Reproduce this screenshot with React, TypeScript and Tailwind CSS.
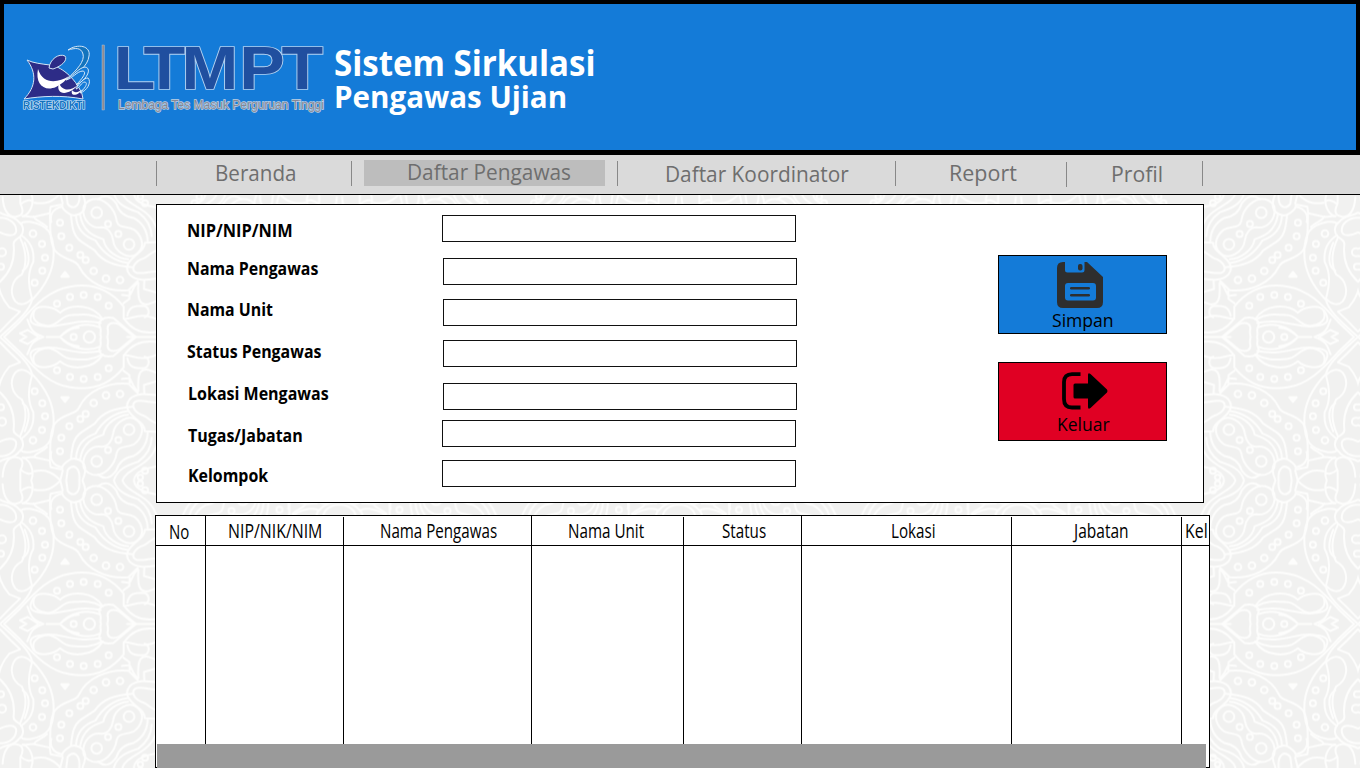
import { useLayoutEffect, useRef } from "react";

type FitProps = { w: number; className?: string; children: string };

/* One line of text condensed or widened to an exact width, with a small side bearing. */
function Fit({ w, className = "", children }: FitProps) {
  const ref = useRef<HTMLSpanElement>(null);
  useLayoutEffect(() => {
    const el = ref.current;
    if (el) el.style.transform = `translateX(1px) scaleX(${(w - 1.5) / el.offsetWidth})`;
  }, [w, children]);
  return (
    <span className={`block shrink-0 ${className}`} style={{ width: w }}>
      <span ref={ref} className="inline-block origin-left whitespace-nowrap align-top">
        {children}
      </span>
    </span>
  );
}

const dots: [number, number, number][] = [
  [290, 68, 16], [387, 163, 16], [268, 441, 17], [324, 102, 9], [355, 132, 9],
  [180, 98, 9], [184, 139, 9], [208, 173, 9], [241, 195, 9], [257, 210, 9],
  [281, 243, 10], [318, 266, 10], [360, 270, 10], [99, 131, 10], [126, 162, 9],
  [135, 203, 9], [127, 242, 9], [104, 278, 9], [171, 341, 9], [210, 321, 9],
  [251, 315, 9], [293, 321, 9], [326, 347, 9], [221, 441, 9], [6, 187, 12],
  [3, 230, 9], [435, 40, 9], [421, 20, 8],
];

const strands = [
  "M0 441 C45 400 88 365 96 330 C135 290 161 245 161 190 C161 130 145 105 90 95 C75 96 66 95 62 102",
  "M12 441 L60 395 C110 340 150 300 210 290 C285 277 335 305 371 350 L371 383",
  "M0 425 L32 392 L60 365 L28 352 C5 325 -6 295 -5 268",
  "M0 275 C32 245 45 205 41 165 C39 152 50 148 61 140 C78 120 64 99 57 97 C45 76 18 80 0 68",
  "M0 83 C28 82 52 102 48 126 C42 142 18 135 0 127",
  "M60 143 C78 181 82 222 65 254 C34 270 27 309 46 334 C61 350 83 341 96 326 C83 279 83 247 100 215 C103 177 91 155 63 135",
  "M68 242 C89 230 91 200 74 158",
  "M8 22 C10 60 25 83 48 80 C79 76 65 49 61 40 L61 12 M94 12 C105 41 90 72 69 79 M62 43 C75 30 92 28 98 35",
  "M67 78 L100 81 L149 70 L152 50 L182 44 M100 80 C112 97 127 96 141 111 M150 72 C151 122 149 156 165 182 C191 213 230 207 238 231 C260 276 320 307 385 301 L413 273",
  "M181 12 L188 40 C179 57 213 78 225 76 C263 70 259 37 248 12 M199 12 L203 42 C221 63 241 48 238 12",
  "M103 38 C137 45 158 34 180 12 M185 50 C158 56 148 76 154 96",
  "M213 79 C217 116 221 139 244 155 L284 181 C308 216 345 228 397 232",
  "M228 78 C230 111 248 138 286 151 C309 190 340 213 384 219",
  "M240 73 C248 124 280 138 310 148 C316 184 356 206 384 208",
  "M250 55 C247 90 274 117 304 112 C323 112 336 128 339 150 C343 186 389 215 415 187 C438 165 421 133 402 119 C377 108 355 115 350 93 C345 54 309 20 278 28 C257 34 250 47 250 55",
  "M294 28 C316 10 334 20 349 41 C357 68 377 80 401 84 C432 101 442 128 443 154",
  "M342 12 C353 47 386 57 415 67 C438 84 454 107 455 139 M368 12 C375 31 394 39 426 60 C457 80 468 105 476 133",
  "M402 12 C406 41 445 48 472 53 M480 156 L435 158 C433 180 415 188 401 202 C378 222 377 240 389 254 C412 278 455 267 480 265",
  "M480 181 C453 180 443 205 423 208 C395 222 394 244 411 249 C437 252 460 240 480 246",
  "M413 276 C379 318 405 321 366 315 M389 302 L388 327 L370 340 M433 272 L432 297 L480 311 M415 279 C413 320 415 346 443 343 L480 330",
  "M382 377 C387 349 405 347 428 347 C448 348 453 374 434 382 M371 386 C390 390 414 370 447 380 C466 383 474 390 480 397",
  "M375 390 C398 422 435 434 480 424 M382 441 L408 441 L340 384 C308 378 292 394 300 411 C306 422 298 432 303 441",
  "M403 441 L357 403 C332 393 321 404 323 418 C326 431 322 436 322 441",
  "M100 364 C82 394 93 404 125 407 C180 420 215 382 302 399 M102 362 C118 342 163 351 180 368 C214 340 280 343 308 388",
  "M103 362 C91 391 116 405 143 408 C179 405 182 376 215 375 C254 372 277 371 305 388",
  "M82 389 C92 409 88 426 130 441 M180 441 C205 409 260 394 300 412 M140 441 L180 441 C205 419 218 414 236 413",
  "M60 430 L83 420 L116 441 M60 430 L79 441 M410 441 L510 441 M480 360 C498 370 502 390 510 401",
];

function Motif() {
  return (
    <g fill="none" stroke="#fdfdfc" strokeWidth="6" strokeLinejoin="round" strokeLinecap="round">
      {strands.map((d) => <path key={d} d={d} />)}
      {dots.map(([x, y, r]) => <circle key={`${x}-${y}`} cx={x} cy={y} r={r} />)}
      <path d="M184 260 L195 246 L206 260 Z" fill="#fdfdfc" />
    </g>
  );
}

function Backdrop() {
  return (
    <svg className="absolute inset-0 -z-10" width="1360" height="768" aria-hidden="true">
      <defs>
        <clipPath id="quarter"><rect x="0" y="10.5" width="510" height="431" /></clipPath>
        <g id="cell"><g clipPath="url(#quarter)"><Motif /></g></g>
        <g id="half">
          <use href="#cell" />
          <use href="#cell" transform="matrix(1 0 0 -1 0 882)" />
        </g>
        <pattern id="lace" x="0" y="193.5" width="339.5" height="287" patternUnits="userSpaceOnUse">
          <g transform="translate(0 -3.5) scale(.3333)">
            <use href="#half" />
            <use href="#half" transform="matrix(-1 0 0 1 1018.5 0)" />
          </g>
        </pattern>
      </defs>
      <rect width="1360" height="768" fill="#f1f1f0" />
      <rect y="195" width="1360" height="573" fill="url(#lace)" />
    </svg>
  );
}

function Logo() {
  return (
    <svg width="310" height="96" viewBox="18 28 310 96" aria-label="LTMPT">
      <g stroke="#d3e6f7" strokeWidth="1" strokeLinejoin="round">
        <path fill="#2d2c87" d="M27 60 C33 63 42 64 50 65 C60 66 75 77 82 94 L83 99 C62 95 42 96 24 99 C36 87 37 73 27 60Z" />
        <path fill="#2d2c87" d="M49 68 C50 59 59 53 65 56 C68 60 62 66 53 69Z" />
        <path fill="#1474bd" d="M68 50 C78 43 91 46 89 56 C88 66 77 74 67 79 C77 70 85 61 83 54 C81 47 75 48 68 50Z" />
        <path fill="#147bd8" d="M66 80 C76 73 79 68 85 67 C92 68 88 79 76 85 C83 78 87 72 83 71 C77 71 72 79 66 80Z M76 89 C80 82 84 78 88 78 C92 82 87 91 80 93 C86 87 88 83 85 82 C81 82 80 88 76 89Z" />
      </g>
      <g fill="white">
        <path d="M38 69 C35 84 44 92 56 87 C62 84 66 80 69 76 C58 83 43 85 38 69Z" />
        <path d="M59 83 C55 95 68 97 79 84 C70 92 62 91 59 83Z M72 90 C70 98 79 95 83 89 C78 93 74 93 72 90Z" />
      </g>
      <text x="23" y="108.500" fontFamily="Liberation Sans" fontSize="10" fontWeight="bold" fill="#1272bd" stroke="#e1effa" strokeWidth="1.200" paintOrder="stroke" textLength="62" lengthAdjust="spacingAndGlyphs">RISTEKDIKTI</text>
      <rect x="102" y="45" width="2.4" height="65" fill="#8e8b93" stroke="#bfd0df" strokeWidth=".4" />
      <g transform="translate(0 88.500) scale(1.1 1)">
        <text x="103.500 130.500 165 217.500 256" y="0" fontFamily="Liberation Sans" fontWeight="bold" fontSize="62" fill="#204f9f" stroke="#b5d3f1" strokeWidth="1.700" paintOrder="stroke">LTMPT</text>
      </g>
      <text x="118" y="108.500" fontFamily="Liberation Sans" fontSize="12" fill="#858794" stroke="#c0d1e3" strokeWidth="1.300" paintOrder="stroke" textLength="206" lengthAdjust="spacingAndGlyphs">Lembaga Tes Masuk Perguruan Tinggi</text>
    </svg>
  );
}

const labels = [
  { text: "NIP/NIP/NIM", w: 107, pos: "mt-[13px] ml-[29px]" },
  { text: "Nama Pengawas", w: 133, pos: "mt-[14px] ml-[29px]" },
  { text: "Nama Unit", w: 87, pos: "mt-[17px] ml-[29px]" },
  { text: "Status Pengawas", w: 136, pos: "mt-[18px] ml-[29px]" },
  { text: "Lokasi Mengawas", w: 142, pos: "mt-[18px] ml-[30px]" },
  { text: "Tugas/Jabatan", w: 116, pos: "mt-[18px] ml-[30px]" },
  { text: "Kelompok", w: 82, pos: "mt-4 ml-[30px]" },
];

const fields = [
  "mt-[10px]", "mt-4 ml-px", "mt-[14px] ml-px", "mt-[14px] ml-px",
  "mt-4 ml-px", "mt-[10px]", "mt-[13px]",
];

const columns = [
  { text: "No", w: 22, pos: "ml-3 mt-[3px]", line: "" },
  { text: "NIP/NIK/NIM", w: 96, pos: "ml-[21px] mt-[2px]", line: "" },
  { text: "Nama Pengawas", w: 119, pos: "ml-[35px] mt-[2px]", line: "mt-px" },
  { text: "Nama Unit", w: 78, pos: "ml-[35px] mt-[2px]", line: "" },
  { text: "Status", w: 46, pos: "ml-[37px] mt-[2px]", line: "mt-px" },
  { text: "Lokasi", w: 46, pos: "ml-[88px] mt-[2px]", line: "" },
  { text: "Jabatan", w: 56, pos: "ml-[61px] mt-[2px]", line: "mt-px" },
  { text: "Kel", w: 24, pos: "ml-[2px] mt-[2px]", line: "mt-px" },
];

function Separator({ className = "mt-[6px]" }: { className?: string }) {
  return <span className={`h-[25px] w-px shrink-0 bg-[#888] ${className}`} />;
}

export default function App() {
  return (
    <div className="relative isolate flex h-[768px] w-[1360px] flex-col overflow-hidden font-['Open_Sans',sans-serif] text-black">
      <Backdrop />
      <header className="flex h-[155px] shrink-0 border-4 border-b-[5px] border-black bg-[#147bd8]">
        <div className="ml-[14px] mt-6 w-[310px] shrink-0"><Logo /></div>
        <div className="ml-[5px] mt-[42px] font-bold text-white">
          <Fit w={263} className="text-[36px] leading-[34px]">Sistem Sirkulasi</Fit>
          <Fit w={235} className="text-[30.5px] leading-8">Pengawas Ujian</Fit>
        </div>
      </header>

      <nav className="flex h-10 shrink-0 border-b border-black bg-[#dadada] pl-[156px] text-[21px] leading-7 text-[#6e6e6e]">
        <Separator />
        <Fit w={83} className="ml-[57px] mt-1">Beranda</Fit>
        <Separator className="ml-[54px] mt-[6px]" />
        <div className="ml-3 mt-[5px] flex h-[26px] w-[241px] bg-[#bdbdbd]">
          <Fit w={166} className="-mt-[2px] ml-[42px]">Daftar Pengawas</Fit>
        </div>
        <Separator className="ml-3 mt-[6px]" />
        <Fit w={185} className="ml-[46px] mt-[5px]">Daftar Koordinator</Fit>
        <Separator className="ml-[46px] mt-[6px]" />
        <Fit w={69} className="ml-[52px] mt-1">Report</Fit>
        <Separator className="ml-[49px] mt-[7px]" />
        <Fit w={54} className="ml-[43px] mt-[5px]">Profil</Fit>
        <Separator className="ml-[38px] mt-[6px]" />
      </nav>

      <main>
        <form className="ml-[156px] mt-[9px] flex h-[299px] w-[1048px] border border-black bg-white">
          <div className="w-[285px] shrink-0 text-[18px] font-bold leading-6">
            {labels.map((l) => <Fit key={l.text} w={l.w} className={l.pos}>{l.text}</Fit>)}
          </div>
          <div className="w-[355px] shrink-0">
            {fields.map((pos, i) => (
              <input key={i} aria-label={labels[i].text} className={`block h-[27px] w-[354px] border border-[#111] bg-white px-2 outline-none ${pos}`} />
            ))}
          </div>
          <div className="ml-[201px] mt-[50px] flex flex-col gap-7 text-[18px] leading-6">
            <button type="button" className="flex h-[79px] w-[169px] flex-col items-center border border-black bg-[#147bd8]">
              <svg className="ml-[-5px] mt-[6px] shrink-0" width="46" height="46" viewBox="0 0 46 46" fill="#2e2e2e" fillRule="evenodd">
                <path d="M6 0H8V8Q8 10.500 10.500 10.500H25Q27.500 10.500 27.500 8V0H30L46 15V40Q46 46 40 46H6Q0 46 0 40V6Q0 0 6 0ZM11 21Q8 21 8 24V35.500Q8 38.500 11 38.500H36Q39 38.500 39 35.500V24Q39 21 36 21Z" />
                <rect x="21" y="2" width="4.500" height="6.500" rx="2" />
                <rect x="13" y="25" width="20" height="2.600" rx="1.300" />
                <rect x="13" y="32" width="20" height="2.600" rx="1.300" />
              </svg>
              <Fit w={63} className="text-left">Simpan</Fit>
            </button>
            <button type="button" className="flex h-[79px] w-[169px] flex-col items-center border border-black bg-[#e00023]">
              <svg className="ml-[4px] mt-[9px] shrink-0" width="46" height="38" viewBox="0 0 46 38">
                <path d="M18.500 2.100H10Q2 2.100 2 10V27Q2 35.500 10 35.500H18.500" fill="none" stroke="black" strokeWidth="3.800" />
                <path d="M13 11.500H26V3Q26 0 28.500 2L45 17.500Q46 19 45 20.500L28.500 36Q26 38 26 35V26.500H13Q11.500 26.500 11.500 25V13Q11.500 11.500 13 11.500Z" />
              </svg>
              <Fit w={54} className="mt-[2px] text-left">Keluar</Fit>
            </button>
          </div>
        </form>

        <section className="ml-[155px] mt-3 flex h-[253px] w-[1055px] flex-col border border-black bg-white">
          <div className="-ml-px grid grow grid-cols-[50px_138px_188px_152px_118px_210px_170px_28px] text-[20.5px] leading-6">
            {columns.map((c) => (
              <div key={c.text} className={`flex flex-col border-l border-black ${c.line}`}>
                <div className={`h-[30px] shrink-0 border-b border-black ${c.line ? "-mt-px" : ""}`}>
                  <Fit w={c.w} className={c.pos}>{c.text}</Fit>
                </div>
              </div>
            ))}
          </div>
          <div className="-mb-px ml-px h-6 w-[1049px] shrink-0 bg-[#9a9a9a]" />
        </section>
      </main>
    </div>
  );
}
